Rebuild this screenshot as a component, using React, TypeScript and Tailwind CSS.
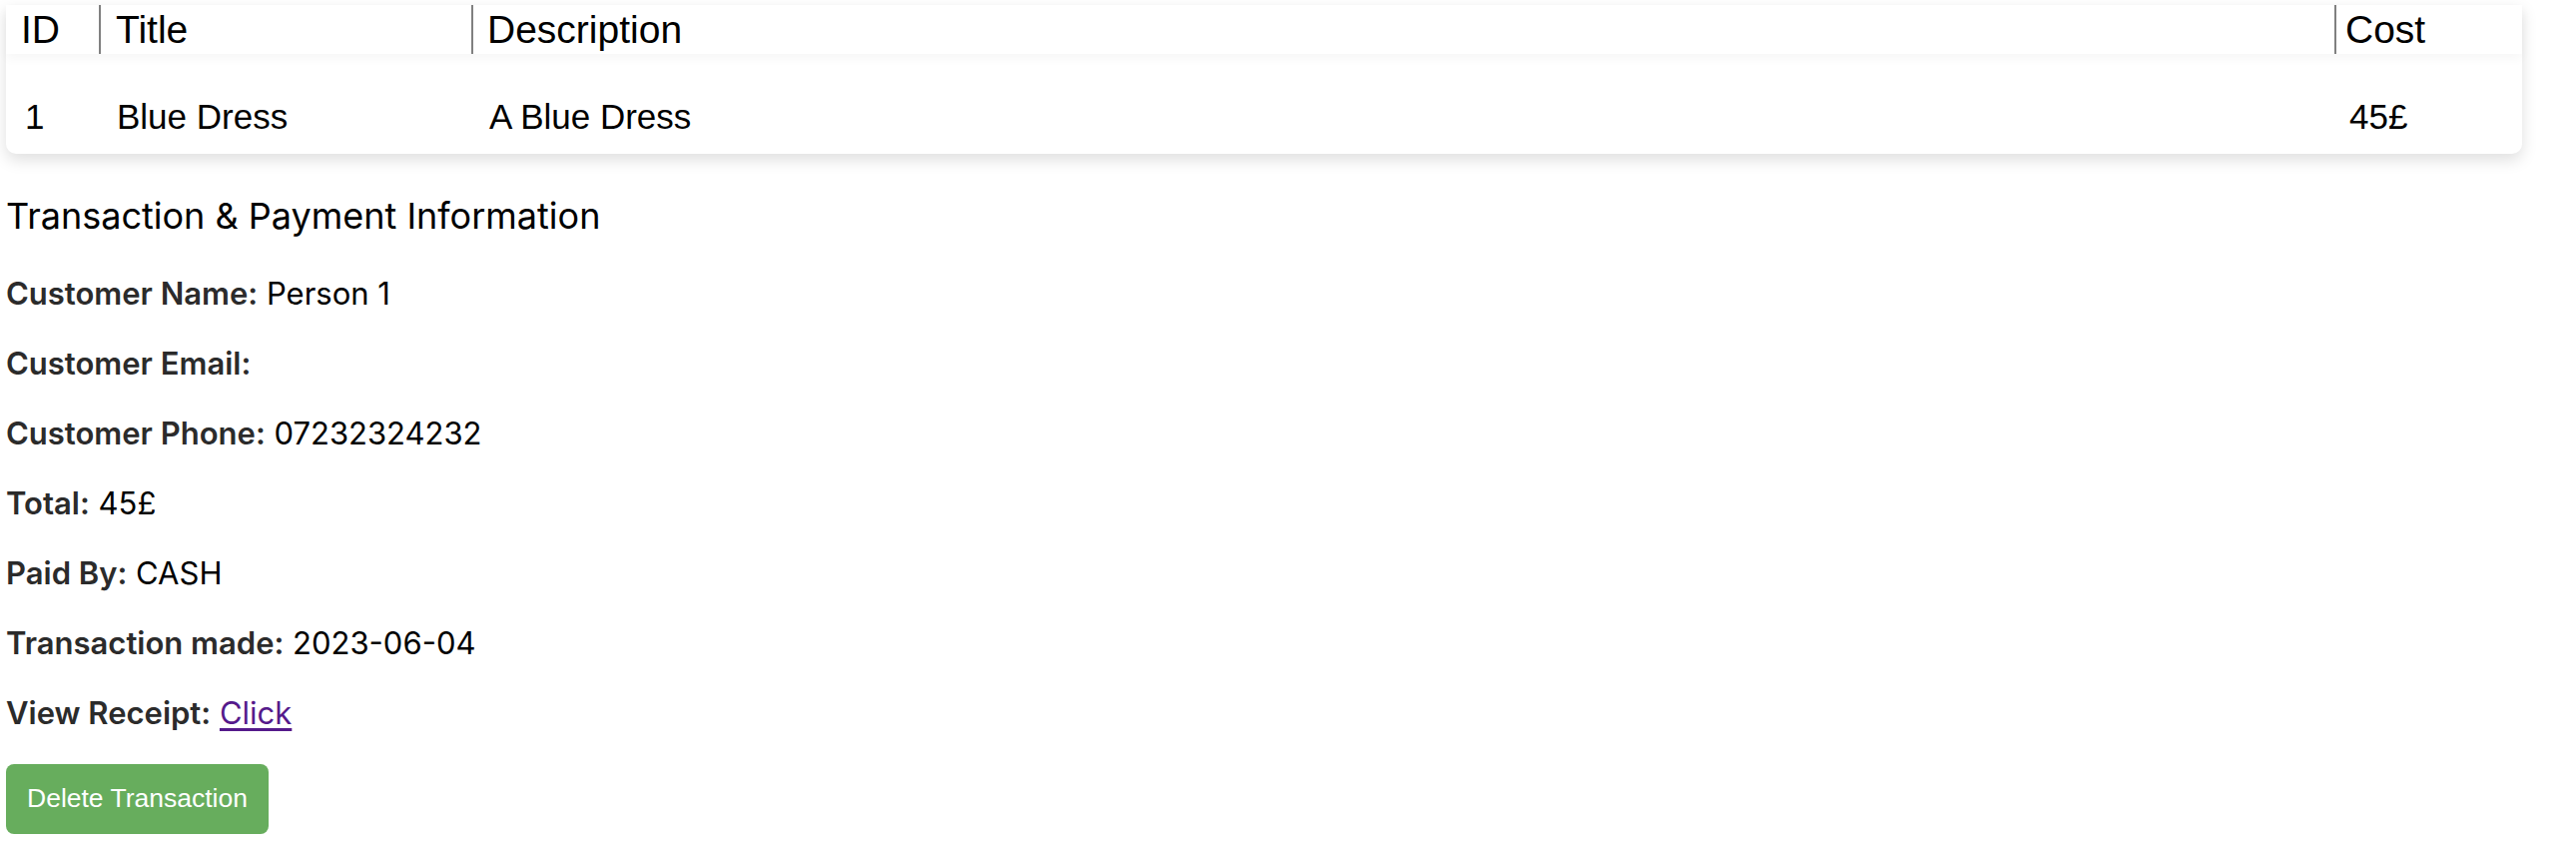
import clsx from 'clsx';

const rows = [{ id: 1, title: 'Blue Dress', description: 'A Blue Dress', cost: '45£' }];

const info: { label: string; value?: string; link?: boolean }[] = [
  { label: 'Customer Name:', value: 'Person 1' },
  { label: 'Customer Email:' },
  { label: 'Customer Phone:', value: '07232324232' },
  { label: 'Total:', value: '45£' },
  { label: 'Paid By:', value: 'CASH' },
  { label: 'Transaction made:', value: '2023-06-04' },
  { label: 'View Receipt:', value: 'Click', link: true },
];

const cols = 'grid grid-cols-[93px_373px_1fr_188px]';

export default function App() {
  return (
    <div className="min-h-[848px] bg-white pt-[5px]">
      <div className="ml-[6px] mr-[54px] rounded-b-[10px] bg-white font-['Liberation_Sans',Arial,sans-serif] text-black shadow-[0_6px_16px_rgba(0,0,0,0.13)]">
        <div className={clsx(cols, 'relative z-10 h-[49px] items-center bg-white text-[39px] shadow-[0_5px_10px_rgba(0,0,0,0.035)]')}>
          <div className="pl-[15px] leading-none">ID</div>
          <div className="flex h-full items-center border-l-2 border-[#808080] pl-[15px] leading-none">Title</div>
          <div className="flex h-full items-center border-l-2 border-[#808080] pl-[14px] leading-none">Description</div>
          <div className="flex h-full items-center border-l-2 border-[#808080] pl-[9px] leading-none">Cost</div>
        </div>
        {rows.map((r) => (
          <div key={r.id} className={clsx(cols, 'h-[100px] items-center pt-[24px] text-[35px] leading-none')}>
            <div className="pl-[19px]">{r.id}</div>
            <div className="pl-[18px]">{r.title}</div>
            <div className="pl-[18px]">{r.description}</div>
            <div className="pl-[15px]">{r.cost}</div>
          </div>
        ))}
      </div>

      <div className="px-[6px] font-['Inter',sans-serif]">
        <h3 className="mt-[41px] text-[36px] leading-[43px] font-normal text-black">
          Transaction &amp; Payment Information
        </h3>
        <div className="mt-[37px] flex flex-col gap-[33px] text-[31px] leading-[37px]">
          {info.map((i) => (
            <p key={i.label} className="text-black">
              <span className="font-semibold text-[#2b2b2b]">{i.label}</span>
              {i.value && ' '}
              {i.link ? (
                <a href="#" className="text-[#551a8b] underline underline-offset-[4px]">
                  {i.value}
                </a>
              ) : (
                i.value
              )}
            </p>
          ))}
        </div>
        <button className="mt-[33px] h-[70px] rounded-[8px] bg-[#67ad5d] px-[21px] font-['Liberation_Sans',Arial,sans-serif] text-[26.5px] text-white">
          Delete Transaction
        </button>
      </div>
    </div>
  );
}
